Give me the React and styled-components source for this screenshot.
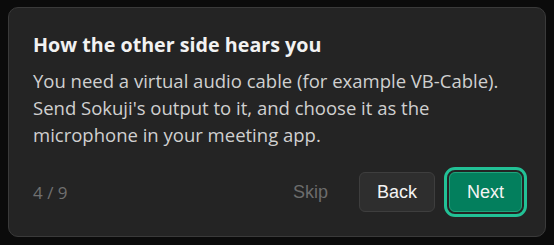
import React from 'react'
import styled, { createGlobalStyle } from 'styled-components'

const GlobalStyle = createGlobalStyle`
    html, body {
        margin: 0;
        padding: 0;
        background: #0b0b0b;
    }
    body {
        font-family: "Open Sans", "Noto Sans", sans-serif;
    }
`

const Page = styled.div`
    padding: 7px 8px;
`

const Card = styled.div`
    box-sizing: border-box;
    width: 538px;
    height: 230px;
    background: #242424;
    border: 1px solid #3a3a3a;
    border-radius: 10px;
    padding: 24px 23px 24px 24px;
    display: flex;
    flex-direction: column;
`

const Title = styled.h2`
    margin: 0;
    font-size: 19.7px;
    font-weight: 700;
    line-height: 26px;
    color: #f2f2f2;
`

const Body = styled.p`
    margin: 9px 0 0;
    font-size: 18.5px;
    line-height: 27px;
    color: #d0d0d0;
    white-space: nowrap;
`

const Footer = styled.div`
    margin-top: auto;
    display: flex;
    align-items: center;
    gap: 13px;
`

const Counter = styled.span`
    flex: 1;
    font-size: 17px;
    color: #707070;
`

const Button = styled.button`
    box-sizing: border-box;
    height: 40px;
    padding: 0 17px;
    margin-left: ${p => p.$variant === 'primary' ? 1 : 0}px;
    border-radius: 6px;
    font-family: "Liberation Sans", Arial, sans-serif;
    font-size: 18px;
    cursor: pointer;
    border: 1px solid ${p => p.$variant === 'primary' ? '#1fa47c' : p.$variant === 'ghost' ? 'transparent' : '#3e3e3e'};
    background: ${p => p.$variant === 'primary' ? '#037f5d' : p.$variant === 'ghost' ? 'transparent' : '#2e2e2e'};
    color: ${p => p.$variant === 'ghost' ? '#6c6c6c' : '#f4f4f4'};
    outline: ${p => p.$focused ? '3px solid #22c196' : 'none'};
    outline-offset: 2px;
`

const App = () => {
    return (
        <>
            <GlobalStyle />
            <Page>
                <Card>
                    <Title>How the other side hears you</Title>
                    <Body>
                        You need a virtual audio cable (for example VB-Cable).<br />
                        Send Sokuji's output to it, and choose it as the<br />
                        microphone in your meeting app.
                    </Body>
                    <Footer>
                        <Counter>4 / 9</Counter>
                        <Button $variant="ghost">Skip</Button>
                        <Button>Back</Button>
                        <Button $variant="primary" $focused>Next</Button>
                    </Footer>
                </Card>
            </Page>
        </>
    )
}

export default App
